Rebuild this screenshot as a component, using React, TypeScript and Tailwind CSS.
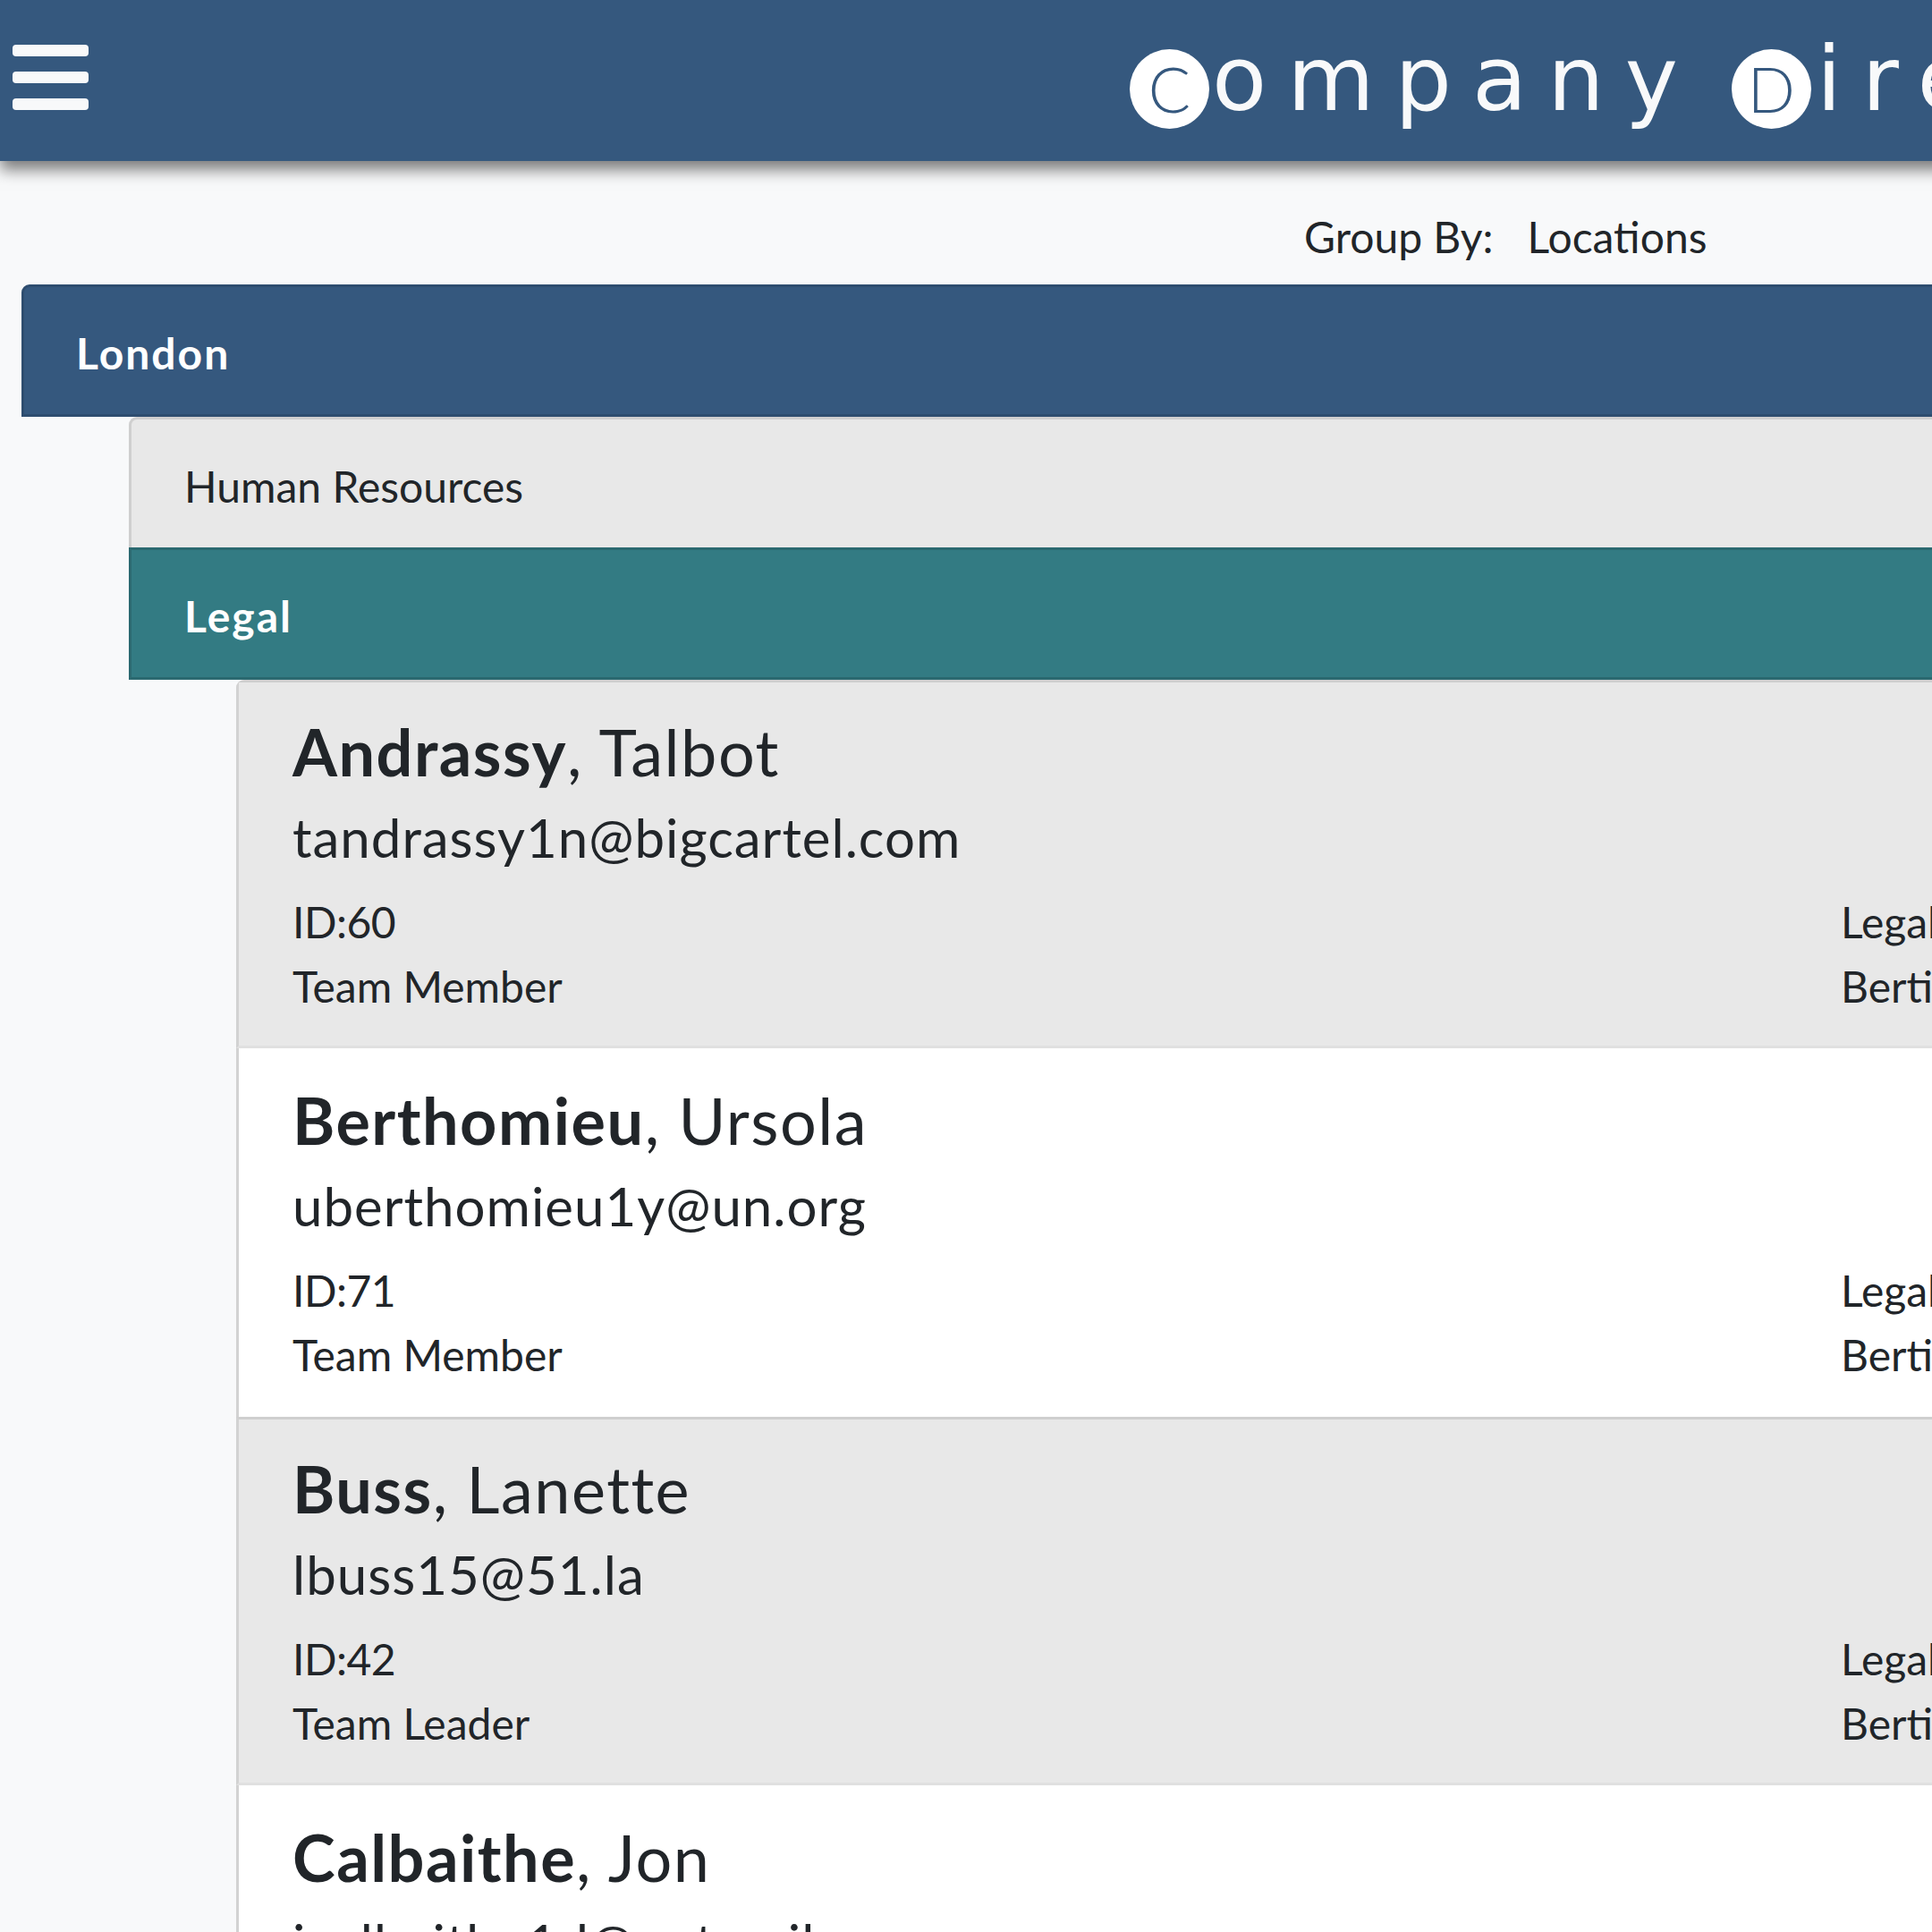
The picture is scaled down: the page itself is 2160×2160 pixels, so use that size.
import { Fragment } from "react";

type Employee = {
	last: string;
	first: string;
	email: string;
	id: number;
	role: string;
	department: string;
	manager: string;
};

const employees: Employee[] = [
	{ last: "Andrassy", first: "Talbot", email: "tandrassy1n@bigcartel.com", id: 60, role: "Team Member", department: "Legal", manager: "Bertie Nuttall" },
	{ last: "Berthomieu", first: "Ursola", email: "uberthomieu1y@un.org", id: 71, role: "Team Member", department: "Legal", manager: "Bertie Nuttall" },
	{ last: "Buss", first: "Lanette", email: "lbuss15@51.la", id: 42, role: "Team Leader", department: "Legal", manager: "Bertie Nuttall" },
	{ last: "Calbaithe", first: "Jon", email: "jcalbaithe1d@netmail.com", id: 17, role: "Team Member", department: "Legal", manager: "Bertie Nuttall" },
];

function Hamburger() {
	return (
		<button className="ml-[14px] mt-[50px] flex flex-col gap-[17px]">
			<span className="block h-[13px] w-[85px] rounded-[4px] bg-[#f8f9fa]" />
			<span className="block h-[13px] w-[85px] rounded-[4px] bg-[#f8f9fa]" />
			<span className="block h-[13px] w-[85px] rounded-[4px] bg-[#f8f9fa]" />
		</button>
	);
}

// white disc with the thin capital centred on it
function Initial({ letter, className = "" }: { letter: string; className?: string }) {
	return (
		<span
			className={`flex h-[89px] w-[89px] shrink-0 items-center justify-center rounded-full bg-white font-['Lato',sans-serif] text-[70px] font-light leading-[89px] tracking-normal text-[#35587e] ${className}`}
		>
			{letter}
		</span>
	);
}

function Logo() {
	return (
		<div className="ml-[1164px] mt-[55px] flex items-start font-['DejaVu_Sans',sans-serif] text-[100px] leading-none tracking-[23px] text-[#f8f9fa]">
			<Initial letter="C" />
			<span className="-mt-[16px] ml-[3px]">ompany</span>
			<Initial letter="D" className="ml-[37px]" />
			<span className="-mt-[16px] ml-[6px]">irectory</span>
		</div>
	);
}

function EmployeeCard({ emp, shaded }: { emp: Employee; shaded: boolean }) {
	return (
		<div
			className={
				shaded
					? "border-b-[3px] border-l-[3px] border-t-[3px] border-b-[#e0e0e0] border-l-[#d2d2d2] border-t-[#cfcfcf] bg-[#e8e8e8] pb-[30px] pl-[60px] pt-[34px]"
					: "border-l-[3px] border-[#d2d2d2] bg-white pb-[33px] pl-[60px] pt-[37px]"
			}
		>
			<h4 className="text-[72px] leading-[86px] tracking-[1.5px]">
				<span className="font-bold">{emp.last}</span>, {emp.first}
			</h4>
			<h5 className="mt-[17px] text-[60px] leading-[72px] tracking-[1px]">{emp.email}</h5>
			<div className="mt-[23px] flex text-[48px] leading-[72px]">
				<div className="w-[1731px] shrink-0">
					<div className="tracking-[-0.5px]">ID:{emp.id}</div>
					<div>{emp.role}</div>
				</div>
				<div className="whitespace-nowrap">
					<div>{emp.department}</div>
					<div>{emp.manager}</div>
				</div>
			</div>
		</div>
	);
}

export default function App() {
	return (
		<div className="h-[2160px] w-[2160px] overflow-hidden bg-[#f8f9fa] font-['Lato',sans-serif] text-[#212529]">
			<div className="w-[2700px]">
				<header className="relative z-10 flex h-[180px] items-start bg-[#35587e] shadow-[0_10px_16px_rgba(0,0,0,0.5)]">
					<Hamburger />
					<Logo />
				</header>

				<div className="flex pb-[17px] pl-[1458px] pt-[49px] text-[48px] leading-[72px]">
					<span>Group By:</span>
					<span className="ml-[38px]">Locations</span>
				</div>

				<section className="ml-[24px]">
					<div className="rounded-tl-[9px] border-[3px] border-[#2e4d6f] bg-[#35587e] pb-[32px] pl-[58px] pt-[38px] text-[48px] font-bold leading-[72px] tracking-[2px] text-white">
						London
					</div>
					<div className="pl-[120px]">
						<div className="rounded-tl-[9px] border-l-[3px] border-t-[3px] border-[#cfcfcf] bg-[#e8e8e8] pb-[32px] pl-[59px] pt-[39px] text-[48px] leading-[72px]">
							Human Resources
						</div>
						<div className="border-y-[3px] border-l-[3px] border-[#2b6970] bg-[#337b83] pb-[32px] pl-[59px] pt-[38px] text-[48px] font-bold leading-[72px] tracking-[2px] text-white">
							Legal
						</div>
						<div className="pl-[120px]">
							<div className="overflow-hidden rounded-tl-[9px]">
								{employees.map((emp, i) => (
									<Fragment key={emp.id}>
										<EmployeeCard emp={emp} shaded={i % 2 === 0} />
									</Fragment>
								))}
							</div>
						</div>
					</div>
				</section>
			</div>
		</div>
	);
}
